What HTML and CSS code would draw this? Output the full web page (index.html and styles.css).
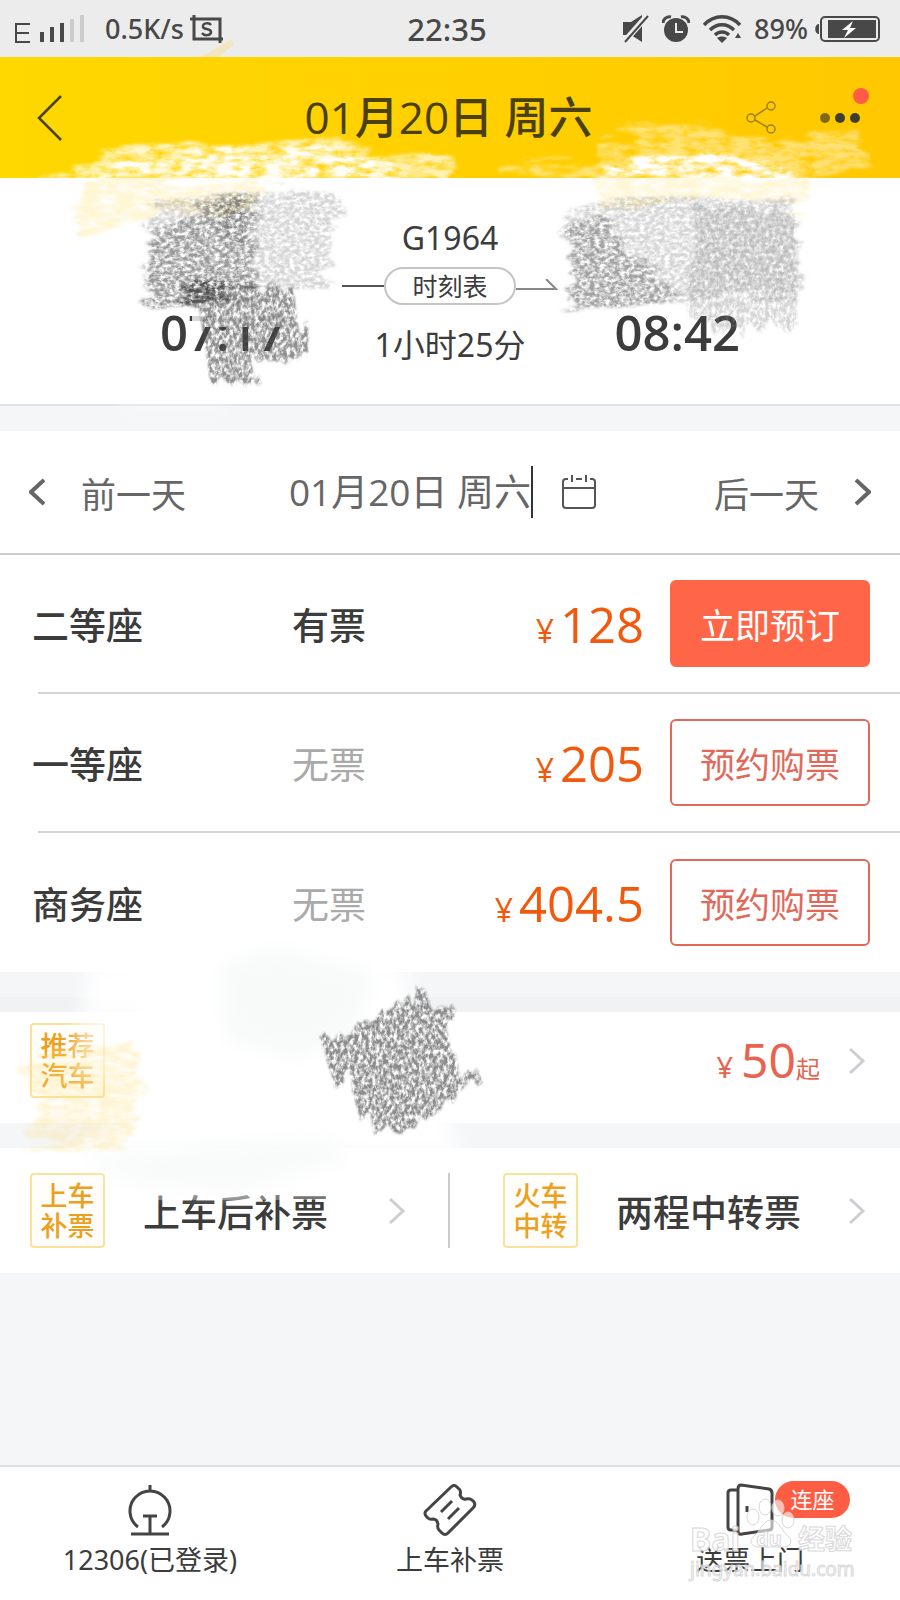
FILE: index.html
```html
<!DOCTYPE html>
<html lang="zh-CN">
<head>
<meta charset="utf-8">
<meta name="viewport" content="width=device-width, initial-scale=1">
<title>01月20日 周六 G1964</title>
<link rel="stylesheet" href="styles.css">
</head>
<body>
<div class="screen">
  <div class="status">
    <div class="status-left">
      <svg class="signal" width="71" height="28" viewBox="0 0 71 28" aria-hidden="true">
        <path d="M16 9H2v18h14M2 18h13" fill="none" stroke="#484848" stroke-width="2"/>
        <path d="M26 17h4v10h-4zM36 12h4v15h-4zM46 8h4v19h-4z" fill="#484848"/>
        <path d="M56 4h4v23h-4zM66 0h4v27h-4z" fill="#ccc"/>
      </svg>
      <span class="net">0.5K/s</span>
      <svg width="34" height="30" viewBox="0 0 34 30" fill="none" stroke="#484848" stroke-width="3" aria-hidden="true">
        <path d="M0 5h30v24M4 1v24h29"/>
        <path d="M21 11c-2-3-9-2-8 2 1 3 8 1 8 5 0 4-7 4-9 1" stroke-width="2.5"/>
      </svg>
    </div>
    <span class="clock">22:35</span>
    <div class="status-right">
      <svg width="27" height="28" viewBox="0 0 27 28" aria-hidden="true">
        <path d="M1 7h8l11-7v27L9 20H1z" fill="#484848"/>
        <path d="M2 27 25 1" stroke="#ececec" stroke-width="6"/><path d="M3 27 26 1" stroke="#484848" stroke-width="2"/>
      </svg>
      <svg width="28" height="28" viewBox="0 0 28 28" aria-hidden="true">
        <circle cx="14" cy="15" r="12" fill="#484848"/><path d="M14 8v9h7" fill="none" stroke="#ececec" stroke-width="2"/>
        <path d="M1 8c0-4 4-7 8-6M27 8c0-4-4-7-8-6" fill="none" stroke="#484848" stroke-width="3"/>
      </svg>
      <svg class="wifi" width="38" height="28" viewBox="0 0 38 28" fill="none" stroke="#484848" stroke-width="3.5" aria-hidden="true">
        <path d="M1 10c10-11 26-11 36 0M7 15c7-7 17-7 24 0M12 20c4-4 10-4 14 0"/><path d="m14 23 5 5 5-5c-3-2-7-2-10 0zM32 23l3-5 3 5z" fill="#484848" stroke="none"/>
      </svg>
      <span class="percent">89%</span>
      <svg width="65" height="26" viewBox="0 0 65 26" aria-hidden="true">
        <path d="M4 8v10c-5 0-5-10 0-10z" fill="#484848"/>
        <rect x="6" y="1" width="58" height="24" rx="4" fill="none" stroke="#484848" stroke-width="2"/>
        <path d="M13 4h48v18H13z" fill="#484848"/><path d="m38 5-11 9h6l-4 8 12-10h-6z" fill="#fff"/>
      </svg>
    </div>
  </div>

  <header class="header">
    <button class="icon-btn back" aria-label="返回"><svg width="26" height="46" viewBox="0 0 26 46"><path d="M24 1 2 23l22 22" fill="none" stroke="#4a4012" stroke-width="2.5"/></svg></button>
    <h1 class="title">01月20日 周六</h1>
    <div class="actions">
      <button class="icon-btn" aria-label="分享"><svg width="30" height="34" viewBox="0 0 30 34" fill="none" stroke="#9b7f12" stroke-width="1.5"><circle cx="5" cy="17" r="4"/><circle cx="25" cy="5" r="4"/><circle cx="25" cy="28" r="4"/><path d="m9 15 12-8M9 19l12 7"/></svg></button>
      <button class="icon-btn more" aria-label="更多"><svg width="40" height="10" viewBox="0 0 40 10"><circle cx="5" cy="5" r="5" fill="#7d6a12"/><circle cx="20" cy="5" r="5" fill="#3f3d30"/><circle cx="35" cy="5" r="5" fill="#3f3d30"/></svg><span class="dot"></span></button>
    </div>
  </header>

  <main class="main">
    <section class="trip">
      <time class="time">07:17</time>
      <div class="train">
        <span class="number">G1964</span>
        <div class="route">
          <span class="line"></span>
          <button class="schedule">时刻表</button>
          <svg width="42" height="14" viewBox="0 0 42 14" fill="none" stroke="#888" stroke-width="2" aria-hidden="true"><path d="M0 10h40L30 0"/></svg>
        </div>
        <span class="number">1小时25分</span>
      </div>
      <time class="time">08:42</time>
    </section>

    <nav class="days">
      <button class="day"><svg width="16" height="28" viewBox="0 0 16 28"><path d="M15 2 2 14l13 12"/></svg>前一天</button>
      <button class="day date"><span class="date-text">01月20日 周六</span>
        <svg width="36" height="36" viewBox="0 0 36 36"><path d="M7 5H5C3 5 2 6 2 8v23c0 2 1 3 3 3h26c2 0 3-1 3-3V8c0-2-1-3-3-3h-2M15 5h6M11 1v7M25 1v7M2 14h32"/></svg></button>
      <button class="day">后一天<svg width="16" height="28" viewBox="0 0 16 28"><path d="m1 2 13 12L1 26"/></svg></button>
    </nav>

    <ul class="seats">
      <li class="seat"><span>二等座</span><span>有票</span><span class="price"><small>¥</small>128</span><button class="buy solid">立即预订</button></li>
      <li class="seat"><span>一等座</span><span class="none">无票</span><span class="price"><small>¥</small>205</span><button class="buy">预约购票</button></li>
      <li class="seat"><span>商务座</span><span class="none">无票</span><span class="price"><small>¥</small>404.5</span><button class="buy">预约购票</button></li>
    </ul>

    <a class="bus" href="#bus">
      <span class="tag">推荐<br>汽车</span>
      <span class="from"><small>¥</small>50<small class="unit">起</small></span>
      <svg class="chev" width="18" height="28" viewBox="0 0 18 28"><path d="m2 2 13 12L2 26"/></svg>
    </a>

    <div class="links">
      <a class="link" href="#onboard"><span class="tag">上车<br>补票</span><span class="link-text">上车后补票</span><svg class="chev" width="18" height="28" viewBox="0 0 18 28"><path d="m2 2 13 12L2 26"/></svg></a>
      <a class="link second" href="#transfer"><span class="tag">火车<br>中转</span><span class="link-text">两程中转票</span><svg class="chev" width="18" height="28" viewBox="0 0 18 28"><path d="m2 2 13 12L2 26"/></svg></a>
    </div>
  </main>

  <nav class="tabs">
    <a class="tab" href="#account">
      <svg width="44" height="52" viewBox="0 0 44 52"><path d="M22 1v5M10 43a20 20 0 1 1 24 0M15 32h14M22 32v17M3 50h38"/></svg>
      <span>12306(已登录)</span>
    </a>
    <a class="tab" href="#supplement">
      <svg width="54" height="52" viewBox="0 0 54 52"><path d="M3 27 28 3q3-3 6 0l3 3q1 3 0 5 2 5 6 4 4-1 6 1l2 2q2 3-1 6L25 49q-3 3-6 0l-3-3q-2-2-1-6-1-5-5-5-3 1-5-1l-2-2q-2-3 0-5zM18 28l11-11M25 35l11-11"/></svg>
      <span>上车补票</span>
    </a>
    <a class="tab" href="#delivery">
      <span class="door"><svg width="46" height="52" viewBox="0 0 46 52"><path d="M11 6H4Q1 6 1 9v34q0 3 3 3h7M14 1l28 4q3 1 3 4v34q0 3-3 3l-27 4q-4 1-4-3V5q0-4 3-4zM20 22v6"/></svg><span class="badge">连座</span></span>
      <span>送票上门</span>
    </a>
  </nav>

  <svg class="strokes" viewBox="0 0 900 1600" aria-hidden="true">
    <defs>
      <filter id="pencil" x="-10%" y="-10%" width="120%" height="120%" color-interpolation-filters="sRGB">
        <feTurbulence type="fractalNoise" baseFrequency=".2 .28" numOctaves="4" seed="4" result="grain"/>
        <feColorMatrix in="grain" values="0 0 0 0 0  0 0 0 0 0  0 0 0 0 0  2.6 0 0 0 -.7" result="holes"/>
        <feTurbulence type="fractalNoise" baseFrequency=".01 .09" numOctaves="3" seed="8" result="wave"/>
        <feDisplacementMap in="SourceGraphic" in2="wave" scale="36" xChannelSelector="R" yChannelSelector="A" result="rough"/>
        <feGaussianBlur in="rough" stdDeviation="1.5" result="edge"/>
        <feComposite in="edge" in2="holes" operator="in"/>
      </filter>
      <filter id="pencil-down" x="-10%" y="-10%" width="120%" height="120%" color-interpolation-filters="sRGB">
        <feTurbulence type="fractalNoise" baseFrequency=".28 .2" numOctaves="4" seed="9" result="grain"/>
        <feColorMatrix in="grain" values="0 0 0 0 0  0 0 0 0 0  0 0 0 0 0  2.8 0 0 0 -.8" result="holes"/>
        <feTurbulence type="fractalNoise" baseFrequency=".08 .01" numOctaves="2" seed="8" result="wave"/>
        <feDisplacementMap in="SourceGraphic" in2="wave" scale="36" xChannelSelector="A" yChannelSelector="G" result="rough"/>
        <feGaussianBlur in="rough" stdDeviation="1" result="edge"/>
        <feComposite in="edge" in2="holes" operator="in"/>
      </filter>
      <filter id="chalk" x="-10%" y="-20%" width="120%" height="140%" color-interpolation-filters="sRGB">
        <feTurbulence type="fractalNoise" baseFrequency=".06 .16" numOctaves="5" seed="3" result="grain"/>
        <feColorMatrix in="grain" values="0 0 0 0 0  0 0 0 0 0  0 0 0 0 0  2 0 0 0 -.25" result="holes"/>
        <feTurbulence type="fractalNoise" baseFrequency=".01 .09" numOctaves="3" seed="6" result="wave"/>
        <feDisplacementMap in="SourceGraphic" in2="wave" scale="36" xChannelSelector="R" yChannelSelector="G" result="rough"/>
        <feGaussianBlur in="rough" stdDeviation="1.5" result="edge"/>
        <feComposite in="edge" in2="holes" operator="in"/>
      </filter>
      <filter id="soft" x="-10%" y="-10%" width="120%" height="120%"><feGaussianBlur stdDeviation="9"/></filter>
    </defs>
    <path d="m201 57 31-18 1 6-15 12z" fill="#f6df8e" opacity=".5"/>
    <g filter="url(#chalk)">
      <path d="M40 171 150 148 240 137 350 139 350 150 395 153 450 160 450 168 400 178 60 178z" fill="#fff" opacity=".7"/>
      <path d="M120 164 240 148 350 150 390 160 400 182 90 182z" fill="#fff" opacity=".85"/>
      <path d="M500 166 595 166 600 140 640 150 625 128 690 120 770 138 862 136 868 170 815 178 500 176z" fill="#fff" opacity=".45"/>
      <path d="M600 168 640 152 700 148 770 160 800 182 600 182z" fill="#fff"/>
      <path d="M80 178 260 178 255 205 160 218 70 242z" fill="#ffeeaa" opacity=".5"/>
      <path d="M595 178 810 178 805 208 700 198 600 206z" fill="#fff0b0" opacity=".5"/>
    </g>
    <path d="M192 303h105l-12 24h-93z" fill="#fff" opacity=".8"/>
    <g filter="url(#pencil)" transform="translate(-20 -14)">
      <path d="M168 222 250 202 360 204 355 242 345 282 350 304 270 312 170 324 165 292 175 252z" fill="#888" opacity=".35"/>
      <path d="M170 250 220 222 260 210 270 262 282 302 170 324z" fill="#555" opacity=".45"/>
      <path d="M204 302 282 302 282 308 208 315z" fill="#333" opacity=".7"/>
      <path d="M585 224 660 210 810 212 820 262 815 312 690 314 590 328 592 282z" fill="#888" opacity=".35"/>
      <path d="M592 242 620 227 650 272 700 308 590 326z" fill="#666" opacity=".45"/>
      <path d="M230 203 275 203 275 250 240 250z" fill="#444" opacity=".25"/>
    </g>
    <g filter="url(#pencil-down)" transform="translate(-20 -12)">
      <path d="M202 300 314 298 326 370 308 370 290 375 272 380 276 396 226 396z" fill="#555" opacity=".65"/>
      <path d="M704 216 810 222 820 338 770 335 765 350 740 345 710 325z" fill="#888" opacity=".35"/>
    </g>
    <g filter="url(#soft)" fill="#fff">
      <path d="M90 965 240 950 375 955 410 975 405 1020 450 1120 460 1155 55 1155 130 1115 130 1015 85 1010z" opacity=".95"/>
      <path d="M80 1000h42v80H72z" opacity=".6"/>
      <path d="M120 401h110v8H120z" opacity=".7"/>
    </g>
    <g filter="url(#soft)">
      <path d="m220 965 55-18 100 27-20 60-60 25-70-20z" fill="#f6f9f8" opacity=".8"/>
      <path d="m80 1155 250-20 20 25-110 35-110-10z" fill="#f8faf9" opacity=".8"/>
    </g>
    <path d="M145 1194h180v6H145z" fill="#fff" opacity=".3"/>
    <g filter="url(#chalk)" fill="#ffdf80">
      <path d="M20 1066 40 1056 140 1044 142 1090 130 1150 28 1144 38 1100z" opacity=".32"/>
    </g>
    <g filter="url(#pencil-down)" fill="#777" transform="translate(-20 0)">
      <path d="m338 1042 36-14 34-18 22-14 3-8 8 6 14 14 22-2-8 22 32 60-17-7-9 22-58 26-20 6z" opacity=".85"/>
    </g>
  </svg>

  <div class="watermark" aria-hidden="true">
    <svg width="50" height="50" viewBox="0 0 50 50"><g fill="#fff" fill-opacity=".7" stroke="#d2d2d2"><ellipse cx="8" cy="19" rx="6" ry="8"/><ellipse cx="20" cy="9" rx="6" ry="8"/><ellipse cx="33" cy="10" rx="6" ry="8"/><ellipse cx="43" cy="22" rx="6" ry="8"/><path d="M26 22c8 0 11 12 18 17 5 5 0 11-7 10H15c-7 1-12-5-7-10 7-5 10-17 18-17z"/></g></svg>
    <div class="brand"><span>Bai</span><span class="du">du</span><span>经验</span></div>
    <div class="site">jingyan.baidu.com</div>
  </div>
</div>
</body>
</html>
```

FILE: styles.css
```css
* { box-sizing: border-box; }
body {
  margin: 0;
  background: #f5f6f8;
  color: #3c3c3c;
  font-family: "Noto Sans", "Noto Sans CJK SC", sans-serif;
}
button {
  font: inherit;
  color: inherit;
  background: none;
  border: 0;
  padding: 0;
}
a { color: inherit; text-decoration: none; }
svg { display: block; flex: none; }
.screen {
  position: relative;
  display: flex;
  flex-direction: column;
  min-height: 100vh;
  overflow: hidden;
}
.main { flex: 1; }

.status {
  display: grid;
  grid-template-columns: 1fr auto 1fr;
  align-items: center;
  height: 57px;
  padding: 0 20px 0 14px;
  background: #ececec;
  color: #484848;
  font-size: 27px;
  font-weight: 500;
}
.status-left, .status-right { display: flex; align-items: center; }
.status-left { gap: 6px; }
.net { margin-left: 14px; }
.clock { font-size: 31px; }
.status-right { justify-content: flex-end; gap: 13px; }
.percent { margin-right: -6px; }

.header {
  display: grid;
  grid-template-columns: 1fr auto 1fr;
  align-items: center;
  height: 121px;
  padding: 0 40px 0 37px;
  background: linear-gradient(90deg, #ffd800, #ffc800);
}
.title {
  margin: 0;
  padding-bottom: 6px;
  font-family: "Open Sans", "Noto Sans CJK SC", sans-serif;
  font-size: 44px;
  font-weight: 500;
  color: #4a4012;
}
.actions { display: flex; justify-content: flex-end; align-items: center; gap: 44px; }
.more { position: relative; }
.dot {
  position: absolute;
  right: -9px;
  top: -25px;
  width: 16px;
  height: 16px;
  border-radius: 50%;
  background: #ff5c48;
}

.trip {
  display: flex;
  justify-content: space-between;
  padding: 35px 160px 34px;
  background: #fff;
  border-bottom: 2px solid #e2e2e4;
}
.time { align-self: flex-end; font-family: "Open Sans", "Noto Sans", sans-serif; font-size: 49px; font-weight: 600; line-height: 76px; }
.train { display: flex; flex-direction: column; align-items: center; font-size: 32px; line-height: 50px; }
.route { display: flex; align-items: center; margin: 4px 0 15px; }
.line { width: 42px; height: 2px; background: #555; }
.schedule {
  width: 132px;
  height: 38px;
  border: 2px solid #c4c4c4;
  border-radius: 19px;
  font-size: 25px;
  line-height: 32px;
}

.days {
  display: flex;
  align-items: center;
  justify-content: space-between;
  height: 124px;
  margin-top: 25px;
  padding: 0 29px;
  background: #fff;
  border-bottom: 2px solid #ccc;
}
.day {
  display: flex;
  align-items: center;
  gap: 36px;
  font-family: "Open Sans", "Noto Sans CJK SC", sans-serif;
  font-size: 35px;
  color: #666;
}
.day svg { fill: none; stroke: #666; stroke-width: 4; }
.date { gap: 28px; padding-right: 14px; font-size: 37px; }
.date svg { stroke: #555; stroke-width: 2; }
.date-text { border-right: 2px solid #333; line-height: 52px; }

.seats { list-style: none; margin: 0; padding: 0; background: #fff; }
.seat {
  display: grid;
  grid-template-columns: 254px auto 1fr 200px;
  align-items: center;
  height: 139px;
  margin-left: 38px;
  padding-right: 30px;
  border-bottom: 2px solid #d4d4d4;
  font-size: 37px;
  font-weight: 500;
}
.seat > :first-child { margin-left: -6px; }
.seat:last-child { border-bottom: 0; }
.none { color: #aaa; font-weight: 400; }
.price { padding-right: 26px; text-align: right; font-family: "Open Sans", "Noto Sans", sans-serif; font-size: 49px; color: #f2590d; }
.price small, .from small { margin-right: 6px; font-size: 32px; font-weight: 400; }
.buy {
  height: 87px;
  border: 2px solid #e2695a;
  border-radius: 6px;
  font-size: 35px;
  font-weight: 400;
  color: #e2695a;
}
.solid { background: #ff6648; border-color: #ff6648; color: #fff; }

.bus {
  display: flex;
  align-items: center;
  height: 111px;
  margin-top: 40px;
  padding: 0 34px 14px 30px;
  background: #fff;
  box-shadow: 0 -15px #f1f2f4;
}
.tag {
  width: 75px;
  height: 75px;
  padding-top: 6px;
  border: 2px solid #fae29c;
  border-radius: 4px;
  background: #fffefa;
  color: #eda01e;
  font-size: 27px;
  font-weight: 500;
  line-height: 30px;
  text-align: center;
}
.from { margin-left: auto; margin-right: 28px; padding-top: 8px; font-size: 48px; line-height: 60px; color: #e8644f; }
.from small { margin-right: 8px; font-size: 29px; }
.from .unit { margin: 0; font-size: 24px; }
.chev { fill: none; stroke: #ccced2; stroke-width: 3; }

.links {
  display: grid;
  grid-template-columns: 1fr 1fr;
  height: 125px;
  margin-top: 25px;
  padding: 25px 0;
  background: #fff;
}
.link { display: flex; align-items: center; padding: 0 42px 0 30px; border-right: 2px solid #ccc; font-size: 37px; font-weight: 500; }
.second { padding: 0 34px 0 53px; border: 0; }
.link-text { margin: 0 auto 0 38px; }

.tabs {
  display: grid;
  grid-template-columns: 1fr 1fr 1fr;
  height: 135px;
  border-top: 2px solid #dedfe1;
  background: #fff;
  font-size: 27px;
}
.tab { display: flex; flex-direction: column; align-items: center; gap: 4px; padding-top: 17px; line-height: 40px; }
.tab svg { fill: none; stroke: #444; stroke-width: 3; }
.door { position: relative; }
.door svg { overflow: visible; }
.badge {
  position: absolute;
  left: 48px;
  top: -3px;
  width: 75px;
  border-radius: 19px;
  background: #ff5c44;
  color: #fff;
  font-size: 22px;
  line-height: 37px;
  text-align: center;
}

.strokes { position: absolute; left: 0; top: 0; width: 100%; pointer-events: none; }

.watermark {
  position: absolute;
  right: 48px;
  bottom: 18px;
  width: 162px;
  color: #fff;
  -webkit-text-stroke: 1px #d2d2d2;
  opacity: .85;
  pointer-events: none;
}
.watermark svg { position: absolute; left: 55px; top: -24px; }
.brand { display: flex; justify-content: space-between; align-items: center; font-size: 32px; font-weight: 700; line-height: 34px; }
.du { font-size: 20px; }
.brand span { position: relative; }
.brand span:last-child { font-size: 27px; }
.site { font-size: 19px; line-height: 26px; }
```
